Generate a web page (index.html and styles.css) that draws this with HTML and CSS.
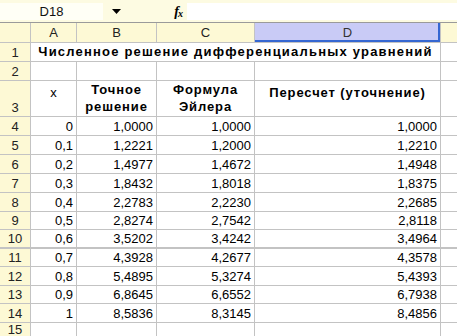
FILE: index.html
```html
<!DOCTYPE html>
<html lang="ru">
<head>
<meta charset="utf-8">
<link rel="stylesheet" href="styles.css">
</head>
<body>
<div class="fbar">
  <div class="namebox">D18</div>
  <div class="drop"><svg width="9" height="5" viewBox="0 0 9 5"><path d="M0 0H9L4.5 5Z" fill="#000"/></svg></div>
  <div class="fx">f<span class="x">x</span></div>
  <div class="finput"></div>
</div>
<div class="sheet">
  <div class="ch corner"></div>
  <div class="ch">A</div>
  <div class="ch">B</div>
  <div class="ch">C</div>
  <div class="ch sel">D</div>
  <div class="ch"></div>

  <div class="rh">1</div>
  <div class="c title">Численное решение дифференциальных уравнений</div>
  <div class="c"></div>

  <div class="rh">2</div>
  <div class="c"></div><div class="c"></div><div class="c"></div><div class="c"></div><div class="c"></div>

  <div class="rh">3</div>
  <div class="c hdr top"><span class="xn">x</span></div>
  <div class="c hdr"><b>Точное</b><b>решение</b></div>
  <div class="c hdr"><b>Формула</b><b>Эйлера</b></div>
  <div class="c hdr top"><b>Пересчет (уточнение)</b></div>
  <div class="c"></div>

  <div class="rh">4</div><div class="c n">0</div><div class="c n">1,0000</div><div class="c n">1,0000</div><div class="c n">1,0000</div><div class="c"></div>
  <div class="rh">5</div><div class="c n">0,1</div><div class="c n">1,2221</div><div class="c n">1,2000</div><div class="c n">1,2210</div><div class="c"></div>
  <div class="rh">6</div><div class="c n">0,2</div><div class="c n">1,4977</div><div class="c n">1,4672</div><div class="c n">1,4948</div><div class="c"></div>
  <div class="rh">7</div><div class="c n">0,3</div><div class="c n">1,8432</div><div class="c n">1,8018</div><div class="c n">1,8375</div><div class="c"></div>
  <div class="rh">8</div><div class="c n">0,4</div><div class="c n">2,2783</div><div class="c n">2,2230</div><div class="c n">2,2685</div><div class="c"></div>
  <div class="rh">9</div><div class="c n">0,5</div><div class="c n">2,8274</div><div class="c n">2,7542</div><div class="c n">2,8118</div><div class="c"></div>
  <div class="rh">10</div><div class="c n">0,6</div><div class="c n">3,5202</div><div class="c n">3,4242</div><div class="c n">3,4964</div><div class="c"></div>
  <div class="rh dbl">11</div><div class="c n dbl">0,7</div><div class="c n dbl">4,3928</div><div class="c n dbl">4,2677</div><div class="c n dbl">4,3578</div><div class="c dbl"></div>
  <div class="rh">12</div><div class="c n">0,8</div><div class="c n">5,4895</div><div class="c n">5,3274</div><div class="c n">5,4393</div><div class="c"></div>
  <div class="rh">13</div><div class="c n">0,9</div><div class="c n">6,8645</div><div class="c n">6,6552</div><div class="c n">6,7938</div><div class="c"></div>
  <div class="rh">14</div><div class="c n">1</div><div class="c n">8,5836</div><div class="c n">8,3145</div><div class="c n">8,4856</div><div class="c"></div>
  <div class="rh last">15</div><div class="c"></div><div class="c"></div><div class="c"></div><div class="c"></div><div class="c"></div>
</div>
</body>
</html>
```

FILE: styles.css
```css
html, body {
  margin: 0;
  padding: 0;
  width: 457px;
  height: 336px;
  overflow: hidden;
  background: #ffffff;
  font-family: "Liberation Sans", Arial, sans-serif;
  font-size: 13px;
  color: #000;
}

.fbar {
  height: 22px;
  box-sizing: border-box;
  background: #fdfbe2;
  padding-top: 3px;
  padding-bottom: 2px;
  display: flex;
  align-items: stretch;
}

.namebox {
  width: 103px;
  background: #fffff6;
  text-align: center;
  line-height: 17px;
  color: #111;
}

.drop {
  width: 26px;
  display: flex;
  align-items: center;
  justify-content: center;
}

.fx {
  width: 58px;
  display: flex;
  align-items: center;
  justify-content: flex-end;
  padding-right: 4px;
  box-sizing: border-box;
  font-family: "Liberation Serif", serif;
  font-style: italic;
  font-weight: bold;
  font-size: 14px;
  line-height: 17px;
}

.fx .x {
  font-size: 10px;
  margin-left: -1px;
  position: relative;
  top: 2px;
}

.finput {
  flex: 1;
  background: #ffffff;
}

.sheet {
  display: grid;
  grid-template-columns: 30px 45px 79px 97px 185px 16px;
  grid-template-rows: 19px 18px 18px 35px 18px 18px 18px 18px 18px 17px 17px 18px 18px 17px 18px 13px;
  gap: 1px;
  background: #c3c3c3;
  border-top: 1px solid #9a9a9a;
}

.ch {
  background: #fdf9d5;
  text-align: center;
  line-height: 19px;
  color: #222;
}

.ch.sel {
  background: #c9cbf6;
  box-shadow: inset -2px -2px 0 #3567d2;
  color: #333;
}

.rh {
  background: #fdf9d5;
  display: flex;
  align-items: flex-end;
  justify-content: center;
  line-height: 16px;
  color: #222;
}

.rh.last {
  align-items: flex-start;
  line-height: 13px;
}

.c {
  background: #ffffff;
}

.dbl {
  box-shadow: inset 0 1px 0 #c3c3c3;
}

.title {
  grid-column: 2 / span 4;
  font-weight: bold;
  text-align: center;
  line-height: 17px;
  letter-spacing: 1.2px;
  white-space: nowrap;
}

.hdr {
  display: flex;
  flex-direction: column;
  align-items: center;
  justify-content: flex-end;
  line-height: 17px;
  padding-bottom: 1px;
}

.hdr.top {
  justify-content: flex-start;
  padding-top: 3px;
}

.hdr b {
  font-weight: bold;
  letter-spacing: 0.9px;
}

.xn {
  font-size: 13px;
}

.n {
  display: flex;
  align-items: flex-end;
  justify-content: flex-end;
  padding-right: 3px;
  line-height: 17px;
}
```
